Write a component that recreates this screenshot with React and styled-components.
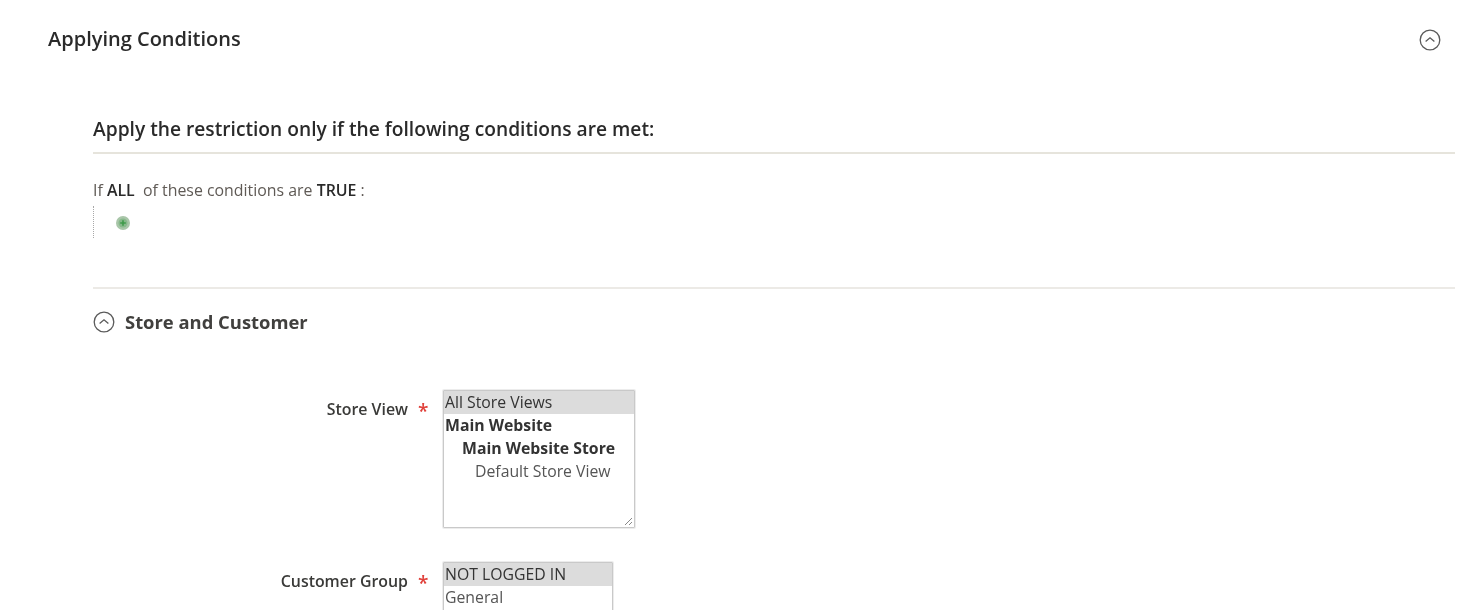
import React from "react";
import styled, { createGlobalStyle } from "styled-components";

const GlobalStyle = createGlobalStyle`
  html, body {
    margin: 0;
    padding: 0;
    background: #fff;
    font-family: "Open Sans", "Liberation Sans", sans-serif;
  }
`;

// the reference is a soft, upscaled capture
const Page = styled.div`
  width: 1480px;
  height: 610px;
  overflow: hidden;
  box-sizing: border-box;
  padding: 0 25px 0 48px;
  filter: blur(0.3px);
`;

const SectionHead = styled.div`
  display: flex;
  justify-content: space-between;
  align-items: center;
  height: 79px;
  padding-right: 14px;
`;

const SectionTitle = styled.h2`
  margin: 0 0 2px;
  font-size: 20px;
  line-height: 26px;
  font-weight: 600;
  color: #2a2a2a;
`;

const Body = styled.div`
  padding-left: 45px;
`;

const ConditionsTitle = styled.h3`
  margin: 0;
  padding: 37px 0 10px;
  font-size: 19.2px;
  line-height: 26px;
  font-weight: 600;
  color: #2a2a2a;
  border-bottom: 2px solid #e6e4dc;
`;

const RuleText = styled.div`
  margin-top: 26px;
  font-size: 15.9px;
  line-height: 20px;
  color: #5f5a55;
  b {
    font-weight: 600;
    color: #2a2a2a;
  }
`;

const RuleTree = styled.div`
  margin-top: 6px;
  height: 32px;
  box-sizing: border-box;
  padding: 7px 0 0 22px;
  border-left: 1px dotted #a8a8a8;
`;

const Divider = styled.div`
  margin-top: 49px;
  border-top: 2px solid #eceae6;
`;

const FieldsetHead = styled.div`
  display: flex;
  align-items: center;
  gap: 10px;
  height: 66px;
  margin-bottom: 35px;
`;

const FieldsetTitle = styled.h4`
  margin: 0;
  font-size: 18.4px;
  line-height: 26px;
  font-weight: 700;
  color: #41403e;
`;

const Field = styled.div`
  display: grid;
  grid-template-columns: 315px 13px 1fr;
  margin-bottom: ${(p) => p.$gap || 0}px;
`;

const FieldLabel = styled.label`
  text-align: right;
  margin-top: 8px;
  font-size: 15.9px;
  line-height: 22px;
  font-weight: 600;
  color: #3a3a38;
`;

const Required = styled.span`
  margin: 10px 0 0 10px;
  font-size: 19px;
  line-height: 22px;
  font-weight: 600;
  color: #e0403a;
`;

const ListBox = styled.div`
  position: relative;
  grid-column: 3;
  margin-left: 22px;
  width: ${(p) => p.$width}px;
  height: ${(p) => p.$height}px;
  box-sizing: border-box;
  border: 1px solid #c9c9c9;
  border-radius: 1px;
  box-shadow: 0 0 0 1px #ececec;
  background: #fff;
`;

const Option = styled.div`
  height: 23px;
  line-height: 23px;
  padding-left: ${(p) => p.$indent || 1}px;
  font-size: 15.8px;
  font-weight: ${(p) => (p.$strong ? 700 : 400)};
  color: ${(p) => (p.$strong || p.$selected ? "#333" : "#555")};
  background: ${(p) => (p.$selected ? "#dcdcdc" : "transparent")};
  white-space: nowrap;
`;

const Grip = styled.svg`
  position: absolute;
  right: 1px;
  bottom: 1px;
`;

const CollapseIcon = ({ size }) => (
  <svg width={size} height={size} viewBox="0 0 22 22" fill="none">
    <circle cx="11" cy="11" r="9.8" stroke="#5a5a5a" strokeWidth="1.3" />
    <path d="M6.6 12.6 L11 8.8 L15.4 12.6" stroke="#5a5a5a" strokeWidth="1.3" />
  </svg>
);

const AddIcon = () => (
  <svg width="14" height="14" viewBox="0 0 14 14">
    <circle cx="7" cy="7" r="7" fill="#a9c6a9" />
    <circle cx="7" cy="7" r="4.5" fill="#86b88a" />
    <path d="M7 4.2v5.6M4.2 7h5.6" stroke="#3f9a4a" strokeWidth="1.6" />
  </svg>
);

export default function App() {
  return (
    <Page>
      <GlobalStyle />
      <SectionHead>
        <SectionTitle>Applying Conditions</SectionTitle>
        <CollapseIcon size={22} />
      </SectionHead>
      <Body>
        <ConditionsTitle>Apply the restriction only if the following conditions are met:</ConditionsTitle>
        <RuleText>
          If <b>ALL</b>&nbsp; of these conditions are <b>TRUE</b> :
        </RuleText>
        <RuleTree>
          <AddIcon />
        </RuleTree>
        <Divider />
        <FieldsetHead>
          <CollapseIcon size={22} />
          <FieldsetTitle>Store and Customer</FieldsetTitle>
        </FieldsetHead>
        <Field $gap={34}>
          <FieldLabel>Store View</FieldLabel>
          <Required>*</Required>
          <ListBox $width={192} $height={138}>
            <Option $selected>All Store Views</Option>
            <Option $strong>Main Website</Option>
            <Option $strong $indent={18}>Main Website Store</Option>
            <Option $indent={31}>Default Store View</Option>
            <Grip width="10" height="10" viewBox="0 0 10 10" fill="none">
              <path d="M2 9 L9 2 M6 9 L9 6" stroke="#888" strokeWidth="1" />
            </Grip>
          </ListBox>
        </Field>
        <Field>
          <FieldLabel>Customer Group</FieldLabel>
          <Required>*</Required>
          <ListBox $width={170} $height={138}>
            <Option $selected>NOT LOGGED IN</Option>
            <Option>General</Option>
          </ListBox>
        </Field>
      </Body>
    </Page>
  );
}
